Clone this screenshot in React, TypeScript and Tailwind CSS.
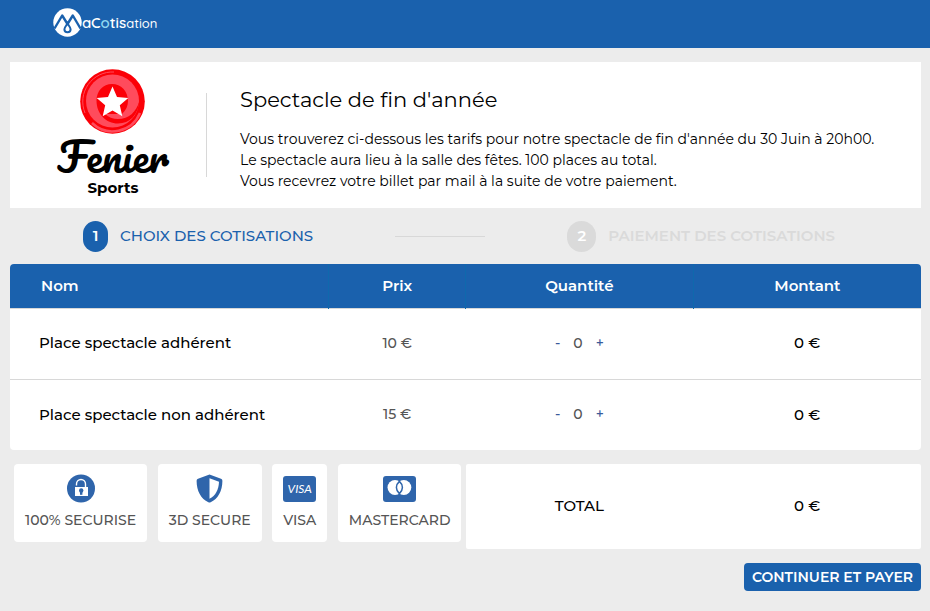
import { useState, type ReactNode } from "react";

const fees = [
  { id: "adherent", name: "Place spectacle adhérent", price: 10 },
  { id: "non-adherent", name: "Place spectacle non adhérent", price: 15 },
];

function BrandLogo() {
  return (
    <a href="/" className="flex items-center text-white">
      <svg width="29" height="29" viewBox="0 0 29 29" aria-hidden="true">
        <circle cx="14.5" cy="14.5" r="14.2" fill="#fff" />
        <path
          d="M1.5 20.5 L9.2 7.5 L14.5 16 L19.8 7.5 L27.5 20.5"
          fill="none"
          stroke="#1a61ad"
          strokeWidth="2.4"
          strokeLinejoin="round"
        />
        <path
          d="M14.5 15.5 C13.6 17.6 11.4 19 11.4 21.2 a3.1 3.1 0 0 0 6.2 0 C17.6 19 15.4 17.6 14.5 15.5Z"
          fill="#fff"
          stroke="#1a61ad"
          strokeWidth="2"
        />
      </svg>
      <span className="pt-px font-[Quicksand,Comfortaa,Lato,sans-serif] text-[15px] leading-5 font-semibold">
        aC<span className="text-[#8fd6f0]">o</span>tis<span className="text-[13px] font-medium">ation</span>
      </span>
    </a>
  );
}

function ClubLogo() {
  return (
    <div className="flex flex-col items-center text-black">
      <svg width="65" height="65" viewBox="0 0 65 65" aria-hidden="true">
        <circle cx="32.5" cy="32.5" r="32.3" fill="#fb0007" />
        <path d="M5 44 A29.7 29.7 0 0 1 34 3" fill="none" stroke="#ff4b5c" strokeWidth="1" />
        <path d="M60 44 A29.7 29.7 0 0 1 12 54" fill="none" stroke="#ff4b5c" strokeWidth="2.5" />
        <circle cx="32.5" cy="32" r="26.5" fill="#ff4b5c" />
        <path
          d="M32 15 C23 15 16.5 22 16.5 31.5 C16.5 45 26 54.5 38 54.5 C50 54.5 58 46 59.5 32 C56 43 49 50 38 50 C33 50 28 48 25 45 L42 45 C46 41 48 37 48 32 C48 22 41 15 32 15Z"
          fill="#fb0007"
        />
        <path
          d="M32.5 17.5 L37 28 L48.3 29 L39.8 36.3 L42.3 47.3 L32.5 41.5 L22.7 47.3 L25.2 36.3 L16.7 29 L28 28Z"
          fill="#fff"
        />
      </svg>
      <span className="font-[Pacifico,cursive] text-[41px] leading-[44px]">Fenier</span>
      <span className="text-[15px] leading-5 font-bold">Sports</span>
    </div>
  );
}

function LockIcon() {
  return (
    <svg width="28" height="29" viewBox="0 0 28 29" aria-hidden="true">
      <circle cx="14" cy="14.5" r="14" fill="#2f65ab" />
      <path d="M9.5 11.5 V10 a4.5 4.5 0 0 1 9 0 V13.5" fill="none" stroke="#fff" strokeWidth="1.4" />
      <rect x="8" y="13" width="13" height="9" fill="#fff" />
      <circle cx="14.2" cy="16.5" r="2.2" fill="#2f65ab" />
      <path d="M13 17 h2.4 v3.8 h-2.4z" fill="#2f65ab" />
    </svg>
  );
}

function ShieldIcon() {
  return (
    <svg width="27" height="29" viewBox="0 0 27 29" aria-hidden="true">
      <path
        d="M13.5 0.5 L25 4.8 Q26.4 5.3 26.4 6.8 C26.4 17 22 25 14.6 28.3 Q13.5 28.8 12.4 28.3 C5 25 0.6 17 0.6 6.8 Q0.6 5.3 2 4.8Z"
        fill="#2f65ab"
      />
      <path d="M13.5 4.2 L23 7.7 C22.8 15.5 19.5 21.8 13.5 24.8Z" fill="#fff" />
    </svg>
  );
}

function VisaIcon() {
  return (
    <span className="flex h-[26px] w-[33px] items-center justify-center rounded-[3px] bg-[#2f65ab] font-[Lato,sans-serif] text-[12px] text-white italic">
      VISA
    </span>
  );
}

function MastercardIcon() {
  return (
    <svg width="33" height="26" viewBox="0 0 33 26" aria-hidden="true">
      <rect width="33" height="26" rx="3" fill="#2f65ab" />
      <circle cx="12" cy="11.5" r="7.5" fill="#fff" />
      <circle cx="20.8" cy="11.5" r="7.5" fill="#fff" />
      <path
        d="M16.4 5.4 C12.4 9 12.4 14 16.4 17.6 C20.4 14 20.4 9 16.4 5.4Z"
        fill="#fff"
        stroke="#2f65ab"
        strokeWidth="1.5"
      />
    </svg>
  );
}

function Badge({ icon, label }: { icon: ReactNode; label: string }) {
  return (
    <li className="flex h-[78px] flex-col items-center rounded bg-white px-[11px] pt-[10px]">
      <span className="flex h-[29px] items-center">{icon}</span>
      <span className="mt-[7px] text-[14px] leading-5 font-medium whitespace-nowrap text-[#555]">{label}</span>
    </li>
  );
}

export default function App() {
  const [quantities, setQuantities] = useState<Record<string, number>>({});

  const quantityOf = (id: string) => quantities[id] ?? 0;
  const change = (id: string, step: number) =>
    setQuantities({ ...quantities, [id]: Math.max(0, quantityOf(id) + step) });
  const total = fees.reduce((sum, fee) => sum + fee.price * quantityOf(fee.id), 0);

  return (
    <div className="min-h-screen bg-[#ececec] font-[Montserrat,Inter,sans-serif] text-black">
      <header className="flex h-12 items-center bg-[#1a61ad] px-[53px] pb-1">
        <BrandLogo />
      </header>

      <main className="pt-[14px] pr-[9px] pb-5 pl-[10px]">
        <section className="flex h-[146px] items-center bg-white">
          <div className="flex w-[196px] shrink-0 justify-center pb-1 pl-[10px]">
            <ClubLogo />
          </div>
          <div className="h-[84px] w-px shrink-0 bg-[#d8d8d8]" />
          <div className="pt-[7px] pl-[33px]">
            <h1 className="text-[21px] leading-7">Spectacle de fin d'année</h1>
            <p className="mt-[15px] text-[14px] leading-[21px]">
              Vous trouverez ci-dessous les tarifs pour notre spectacle de fin d'année du 30 Juin à 20h00.
              <br />
              Le spectacle aura lieu à la salle des fêtes. 100 places au total.
              <br />
              Vous recevrez votre billet par mail à la suite de votre paiement.
            </p>
          </div>
        </section>

        <ol className="flex h-14 items-center justify-between pr-[86px] pl-[73px] text-[15px] font-medium">
          <li className="flex items-center gap-3 text-[#1a61ad]">
            <span className="flex h-[31px] w-[25px] items-center justify-center rounded-full bg-[#1a61ad] font-semibold text-white">
              1
            </span>
            CHOIX DES COTISATIONS
          </li>
          <li aria-hidden="true" className="h-px w-[90px] bg-[#d8d8d8]" />
          <li className="flex items-center gap-3 font-semibold text-[#dadada]">
            <span className="flex h-[31px] w-[29px] items-center justify-center rounded-full bg-[#dadada] text-white">
              2
            </span>
            PAIEMENT DES COTISATIONS
          </li>
        </ol>

        <div className="overflow-hidden rounded bg-white">
          <table className="w-full table-fixed text-center text-[15px] font-medium">
            <thead>
              <tr className="h-11 bg-[#1a61ad] text-white">
                <th className="w-[35%] border-r border-[#0f69ad] pl-[31px] text-left font-semibold">Nom</th>
                <th className="w-[15%] border-r border-[#0f69ad] font-semibold">Prix</th>
                <th className="w-[25%] border-r border-[#0f69ad] font-semibold">Quantité</th>
                <th className="w-[25%] font-semibold">Montant</th>
              </tr>
            </thead>
            <tbody>
              {fees.map((fee) => (
                <tr key={fee.id} className="h-[71px] border-t border-[#d8d8d8]">
                  <td className="pl-[29px] text-left">{fee.name}</td>
                  <td className="text-[14px] text-[#555]">{fee.price} €</td>
                  <td className="text-[14px]">
                    <div className="flex items-center justify-center gap-[13px]">
                      <button
                        type="button"
                        aria-label={`Retirer ${fee.name}`}
                        className="text-[#3a5a9a]"
                        onClick={() => change(fee.id, -1)}
                      >
                        -
                      </button>
                      <span className="text-[#555]">{quantityOf(fee.id)}</span>
                      <button
                        type="button"
                        aria-label={`Ajouter ${fee.name}`}
                        className="text-[#3a5a9a]"
                        onClick={() => change(fee.id, 1)}
                      >
                        +
                      </button>
                    </div>
                  </td>
                  <td>{fee.price * quantityOf(fee.id)} €</td>
                </tr>
              ))}
            </tbody>
          </table>
        </div>

        <div className="mt-[14px] flex items-start">
          <ul className="flex w-1/2 justify-between pr-1 pl-1">
            <Badge icon={<LockIcon />} label="100% SECURISE" />
            <Badge icon={<ShieldIcon />} label="3D SECURE" />
            <Badge icon={<VisaIcon />} label="VISA" />
            <Badge icon={<MastercardIcon />} label="MASTERCARD" />
          </ul>
          <div className="grid h-[85px] w-1/2 grid-cols-2 items-center rounded-xs bg-white text-center text-[15px] font-medium">
            <span>TOTAL</span>
            <span>{total} €</span>
          </div>
        </div>

        <div className="mt-[14px] flex justify-end">
          <button
            type="button"
            className="h-7 rounded bg-[#1a61ad] px-2 text-[14px] leading-5 font-semibold text-white"
          >
            CONTINUER ET PAYER
          </button>
        </div>
      </main>
    </div>
  );
}
